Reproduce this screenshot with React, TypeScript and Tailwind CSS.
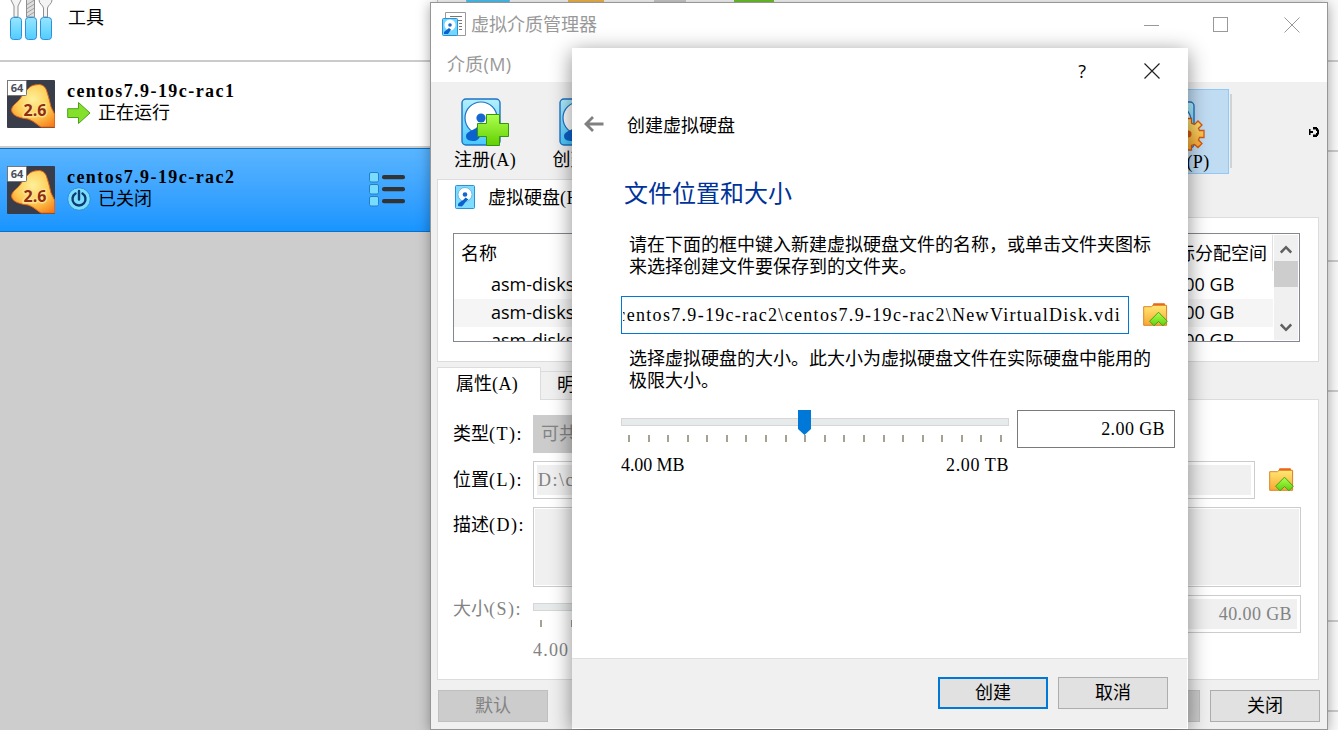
import type { ReactNode } from "react";

const DiskIcon = ({ className = "" }: { className?: string }) => (
  <svg viewBox="0 0 40 48" className={className} preserveAspectRatio="none">
    <defs>
      <linearGradient id="disk" x1="0" y1="0" x2="0" y2="1">
        <stop offset="0" stopColor="#b4f0ff" />
        <stop offset="1" stopColor="#48c8ff" />
      </linearGradient>
    </defs>
    <rect x="1" y="1" width="38" height="46" rx="4" fill="url(#disk)" stroke="#1d73c4" strokeWidth="1.4" />
    <circle cx="20" cy="20" r="16" fill="#fff" stroke="#1d73c4" strokeWidth="1.2" />
    <path d="M5 38C5 33 14 33 19 26L25 30C19 34 20 42 14 43C8 43 5 42 5 38Z" fill="#0b62cd" />
    <circle cx="20" cy="20" r="4.6" fill="#1668cf" />
  </svg>
);

const SmallDiskIcon = () => (
  <svg viewBox="0 0 20 24" className="h-6 w-5 shrink-0">
    <rect x=".5" y=".5" width="19" height="23" rx="1" fill="#7edcff" stroke="#2f8fd8" />
    <circle cx="10" cy="9.500" r="7" fill="#fff" stroke="#5aa9de" strokeWidth=".8" />
    <circle cx="10" cy="9.500" r="2.300" fill="#1668cf" />
    <path d="M3 20C3 17 7 17 10.500 12.500L13.500 14.500C9.500 17 9 20.500 6.500 21.500L3 21Z" fill="#0b62cd" />
  </svg>
);

const PlusIcon = () => (
  <svg viewBox="0 0 32 32" className="absolute left-4 top-4 size-8">
    <defs>
      <linearGradient id="plus" x1="0" y1="0" x2="0" y2="1">
        <stop offset="0" stopColor="#adff4f" />
        <stop offset="1" stopColor="#62cf00" />
      </linearGradient>
    </defs>
    <path d="M9.5 .5H22.5V9.5H31.5V22.5H22.5V31.5H9.5V22.5H.5V9.5H9.5Z" fill="url(#plus)" stroke="#36950e" />
  </svg>
);

const GearIcon = () => (
  <svg viewBox="-17 -17 34 34" className="absolute left-4 top-4 size-[34px]">
    <defs>
      <linearGradient id="gear" x1="0" y1="0" x2="0" y2="1">
        <stop offset="0" stopColor="#fbe77a" />
        <stop offset="1" stopColor="#f9a52b" />
      </linearGradient>
    </defs>
    <path
      d="M-3.500 -15.500H3.500V-11L6.500 -9.500L10 -13L14 -9L10.500 -5.500L11.500 -3.500H16V3.500H11.500L10.500 6L14 9.500L10 13.500L6.500 10.500L3.500 11.500V16H-3.500V11.500L-6.500 10.500L-10 13.500L-14 9.500L-10.500 6L-11.500 3.500H-16V-3.500H-11.500L-10.500 -5.500L-14 -9L-10 -13L-6.500 -9.500L-3.500 -11Z"
      fill="url(#gear)"
      stroke="#d9570f"
      strokeWidth="1.3"
    />
    <circle r="3.5" fill="#d9570f" />
  </svg>
);

const FolderIcon = () => (
  <svg viewBox="0 0 25 24" className="h-6 w-[25px] shrink-0">
    <defs>
      <linearGradient id="folder" x1="0" y1="0" x2="0" y2="1">
        <stop offset="0" stopColor="#ffe873" />
        <stop offset="1" stopColor="#f8a832" />
      </linearGradient>
      <linearGradient id="up" x1="0" y1="0" x2="0" y2="1">
        <stop offset="0" stopColor="#b0ff50" />
        <stop offset="1" stopColor="#5fd010" />
      </linearGradient>
    </defs>
    <path d="M9 4L10.5 .2H21.5L23 3.500H24V10H9Z" fill="#ee5f17" />
    <path d="M.7 3.700H8.5L10 2.300H23.6V22.3H.7Z" fill="url(#folder)" stroke="#dc8424" />
    <path d="M15.5 9.200L24.300 18.200L20 22.800L15.5 18.500L11 22.800L6.600 18.200Z" fill="url(#up)" stroke="#47a414" />
  </svg>
);

const OsIcon = () => (
  <svg viewBox="0 0 48 48" className="size-12 shrink-0">
    <defs>
      <radialGradient id="os" cx=".5" cy=".35" r=".75">
        <stop offset="0" stopColor="#fff09a" />
        <stop offset=".55" stopColor="#fdcb52" />
        <stop offset="1" stopColor="#f77f1b" />
      </radialGradient>
    </defs>
    <rect width="48" height="48" rx="1" fill="#393d49" />
    <path
      d="M21 9C24 5 28 5 32 4.500C37 5 39 8 40 12C42 18 43 23 44 27L47.500 34V47H34C29 44 27 41 21 39C13 38 5 36 4.500 30C5 25 10 23 13 19C16 15 17 12 21 9Z"
      fill="url(#os)"
      stroke="#e4641c"
    />
    <text x="28" y="35.500" textAnchor="middle" fontFamily="Open Sans, sans-serif" fontSize="16" fontWeight="700" fill="#8e2d12" stroke="#fee18a" strokeWidth="3" paintOrder="stroke">
      2.6
    </text>
    <rect x=".5" y=".5" width="19" height="15" rx="1" fill="#fff" stroke="#777" />
    <text x="10" y="12" textAnchor="middle" fontFamily="Open Sans, sans-serif" fontSize="11" fontWeight="700" fill="#4b4f5a">
      64
    </text>
  </svg>
);

const ToolsIcon = () => (
  <svg viewBox="0 0 44 42" className="h-[42px] w-11 shrink-0">
    <defs>
      <linearGradient id="handle" x1="0" y1="0" x2="0" y2="1">
        <stop offset="0" stopColor="#96e6ff" />
        <stop offset="1" stopColor="#52cdff" />
      </linearGradient>
    </defs>
    <g fill="#f4f4f4" stroke="#8f8f8f">
      <path d="M2 0L5 6V17H9V6L12 0" />
      <path d="M17.5 -1V17H25.5V-1Z" fill="#ddd" />
      <path d="M17.5 5L25.5 0M17.5 9L25.5 4M17.5 13L25.5 8M17.5 17L25.5 12" strokeWidth=".8" />
      <path d="M30 0C30 4 34 5 34.500 8V17H38.500V8C39 5 43 4 43 0" />
    </g>
    <g fill="url(#handle)" stroke="#2e8fdc">
      <rect x="1.500" y="17.500" width="11" height="22" rx="3" />
      <rect x="16.500" y="17.500" width="11" height="22" rx="3" />
      <rect x="31.500" y="17.500" width="11" height="22" rx="3" />
    </g>
  </svg>
);

const RunningIcon = () => (
  <svg viewBox="0 0 24 24" className="size-6">
    <path d="M.7 7.700H11.500V1.500L23 12L11.500 22.500V16.500H.7Z" fill="#84e02b" stroke="#4ba11b" />
  </svg>
);

const PowerIcon = () => (
  <svg viewBox="0 0 24 24" className="size-6">
    <circle cx="12" cy="12" r="11.300" fill="#7bdcfc" stroke="#2b8fd6" />
    <path d="M8.500 6.500A6.500 6.500 0 1 0 15.500 6.500M12 4V12.500" fill="none" stroke="#0d3a70" strokeWidth="2.400" strokeLinecap="round" />
  </svg>
);

const ListIcon = () => (
  <svg viewBox="0 0 38 38" className="size-[38px]">
    {[2, 14, 26].map((y) => (
      <g key={y}>
        <rect x="1.500" y={y - 0.5} width="9" height="9.500" rx="1.500" fill="#79dcff" stroke="#2180c8" />
        <rect x="14" y={y + 2} width="23" height="4.200" rx="2" fill="#333" />
      </g>
    ))}
  </svg>
);

const Keys = ({ children }: { children: ReactNode }) => <span className="tracking-[0.4px]">{children}</span>;

const Ticks = ({ count }: { count: number }) => (
  <div className="flex justify-between">
    {Array.from({ length: count }, (_, i) => (
      <span key={i} className="h-[7px] w-0.5 bg-[#a5a294]" />
    ))}
  </div>
);

const MachineRow = ({ name, children }: { name: string; children: ReactNode }) => (
  <div className="flex flex-1 items-center pl-[7px]">
    <OsIcon />
    <div className="mb-[5px] ml-3">
      <div className="h-[22px] text-[18px] font-bold leading-[22px] tracking-[1.44px]">{name}</div>
      <div className="flex h-[22px] items-center gap-[7px]">{children}</div>
    </div>
  </div>
);

const Sidebar = () => (
  <div className="flex w-[437px] flex-col bg-[#cdcdcd]">
    <div className="flex h-[62px] border-b-2 border-[#cbcbcb] bg-white pl-[9px]">
      <ToolsIcon />
      <span className="ml-[15px] mt-1 leading-7">工具</span>
    </div>
    <div className="flex h-[86px] border-b-2 border-[#cbcbcb] bg-white">
      <MachineRow name="centos7.9-19c-rac1">
        <RunningIcon />
        <span>正在运行</span>
      </MachineRow>
    </div>
    <div className="flex h-[84px] items-center border-y border-[#0c70c4] bg-gradient-to-b from-[#58b4ff] to-[#1795ff] pr-[31px]">
      <MachineRow name="centos7.9-19c-rac2">
        <PowerIcon />
        <span>已关闭</span>
      </MachineRow>
      <ListIcon />
    </div>
  </div>
);

const DiskTable = () => (
  <div className="flex h-[109px] overflow-hidden border border-[#828790] bg-white font-['Open_Sans','Noto_Sans_CJK_SC',sans-serif]">
    <div className="mt-px flex-1 overflow-hidden">
      <div className="flex h-9 items-center border-r border-[#e0e0e0] pl-[7px]">
        <span>名称</span>
        <span className="ml-auto mr-[5px]">实际分配空间</span>
      </div>
      {["", "bg-[#f5f5f5]", ""].map((shade, i) => (
        <div key={i} className={`flex h-7 items-center pb-[3px] pl-[37px] ${shade}`}>
          <span>asm-disks</span>
          <span className="ml-auto w-[114px]">40.00 GB</span>
        </div>
      ))}
    </div>
    <div className="m-px flex w-6 flex-col items-center bg-[#f0f0f0]">
      <svg viewBox="0 0 12 9" className="mt-2.5 h-[9px] w-3" fill="none" stroke="#606060" strokeWidth="2.500">
        <path d="M.8 7.500L6 2.200L11.200 7.500" />
      </svg>
      <div className="mt-[7px] h-[26px] w-full bg-[#cdcdcd]" />
      <svg viewBox="0 0 12 9" className="mb-2 mt-auto h-[9px] w-3" fill="none" stroke="#606060" strokeWidth="2.500">
        <path d="M.8 1.500L6 6.800L11.200 1.500" />
      </svg>
    </div>
  </div>
);

const Label = ({ text, hotkey }: { text: string; hotkey: string }) => (
  <div className="w-20 shrink-0 whitespace-nowrap">
    {text}
    <span className="tracking-[1.5px]">({hotkey}):</span>
  </div>
);

const AttributesForm = () => (
  <div className="h-[280px] border border-t-0 border-[#dcdcdc] bg-white pl-[15px] pr-[17px] pt-[15px]">
    <div className="flex h-[38px] items-center">
      <Label text="类型" hotkey="T" />
      <div className="flex h-full w-[240px] items-center bg-[#ccc] pl-2 text-[#838383]">可共享</div>
    </div>
    <div className="mt-2 flex h-[38px] items-center">
      <Label text="位置" hotkey="L" />
      <div className="h-full w-[722px] border border-[#ccc] p-[3px]">
        <div className="flex h-full items-center bg-[#f0f0f0] pl-px tracking-[1.5px] text-[#838383]">D:\centos</div>
      </div>
      <div className="ml-3.5">
        <FolderIcon />
      </div>
    </div>
    <div className="mt-2 flex">
      <div className="pt-[5px]">
        <Label text="描述" hotkey="D" />
      </div>
      <div className="h-20 flex-1 border border-[#ccc] p-px">
        <div className="h-full bg-[#f0f0f0]" />
      </div>
    </div>
    <div className="mt-2 flex text-[#838383]">
      <div className="pt-px">
        <Label text="大小" hotkey="S" />
      </div>
      <div className="w-[598px] pt-2">
        <div className="h-2 border border-[#d6d6d6] bg-[#e7eaea]" />
        <div className="mx-[7px] mt-[9px]">
          <Ticks count={20} />
        </div>
        <div className="mt-2.5 tracking-[1.2px]">4.00 MB</div>
      </div>
      <div className="ml-auto h-[38px] w-40 border border-[#ccc] p-[3px]">
        <div className="flex h-full items-center justify-end bg-[#f0f0f0] pr-[5px]">
          <Keys>40.00 GB</Keys>
        </div>
      </div>
    </div>
  </div>
);

const MediaManager = () => (
  <div className="absolute left-[430px] top-[2px] isolate flex h-[728px] w-[898px] flex-col border border-[#969696] bg-[#f0f0f0] shadow-[0_2px_12px_rgba(0,0,0,0.35)]">
    <div className="flex h-11 shrink-0 items-center bg-white pl-[11px] pr-[27px] text-[#999]">
      <svg viewBox="0 0 24 24" className="-mt-0.5 size-6">
        <path d="M3.500 .5H23.500V23.500H3.500Z" fill="#fff" stroke="#999" />
        <path d="M8 4.500H20M12 8.500H20M17 11.500H20M17 14.500H20M17 17.500H20" stroke="#777" strokeWidth="1.200" />
        <rect x=".5" y="6.500" width="15" height="17" rx="1" fill="#72d6ff" stroke="#2b8fd6" />
        <circle cx="8" cy="13" r="5.500" fill="#fff" />
        <circle cx="8" cy="13" r="1.800" fill="#1668cf" />
        <path d="M2 20L7 16L9 17.500L6 22L2 22Z" fill="#0b62cd" />
      </svg>
      <span className="ml-[5px]">虚拟介质管理器</span>
      <svg viewBox="0 0 156 16" className="ml-auto h-4 w-[156px]" fill="none" stroke="#999">
        <path d="M0 8.500H15M140.500 .5L155.500 15.500M155.500 .5L140.500 15.500" />
        <rect x="69.500" y=".5" width="14" height="14" />
      </svg>
    </div>
    <div className="h-[35px] shrink-0 bg-white pl-4 font-['Open_Sans','Noto_Sans_CJK_SC',sans-serif] leading-[34px] tracking-[0.3px] text-[#999]">介质(M)</div>
    <div className="flex h-[97px] shrink-0 pl-[5px] pr-2 leading-6">
      <div className="flex w-[98px] flex-col items-center pt-4">
        <div className="relative h-12 w-12">
          <DiskIcon className="h-12 w-10" />
          <PlusIcon />
        </div>
        <div className="mt-0.5 whitespace-nowrap">
          注册<Keys>(A)</Keys>
        </div>
      </div>
      <div className="flex w-[98px] flex-col items-center pt-4">
        <div className="w-12">
          <DiskIcon className="h-12 w-10" />
        </div>
        <div className="mt-0.5 whitespace-nowrap">
          创建<Keys>(C)</Keys>
        </div>
      </div>
      <div className="ml-auto mt-[7px] flex h-[85px] w-[100px] flex-col items-center border border-[#90c8f6] bg-[#c0dcf3] pt-[11px]">
        <div className="relative h-12 w-12">
          <DiskIcon className="h-12 w-10" />
          <GearIcon />
        </div>
        <div className="mt-px whitespace-nowrap pl-0.5">
          属性<Keys>(P)</Keys>
        </div>
      </div>
      <div className="ml-px mt-3 h-[74px] w-0.5 bg-[#d2d2d2]" />
      <svg viewBox="0 0 10 10" className="ml-[77px] mt-[45px] size-2.5" fill="#000">
        <path d="M0 2H1.500V4H4V6H1.500V8H0ZM4 0H8V1H9V2.500H10V7.500H9V9H8V10H4V7.500H7V6H8V4H7V2.500H4Z" />
      </svg>
    </div>
    <div className="flex min-h-0 flex-1 flex-col px-1.5 pb-[7px] pr-2">
      <div className="relative z-10 -mb-px flex h-[39px] w-[180px] shrink-0 items-start border border-b-0 border-[#dcdcdc] bg-white pl-[17px] pt-[5px]">
        <SmallDiskIcon />
        <span className="ml-[13px] whitespace-nowrap">
          虚拟硬盘<Keys>(H)</Keys>
        </span>
      </div>
      <div className="h-[145px] shrink-0 border border-[#dcdcdc] bg-white px-[15px] pr-[18px] pt-[15px]">
        <DiskTable />
      </div>
      <div className="mt-[5px] flex h-[33px] shrink-0 items-end">
        <div className="h-full w-[104px] border border-b-0 border-[#dcdcdc] bg-white pl-[18px] leading-8">
          属性<Keys>(A)</Keys>
        </div>
        <div className="h-[29px] w-[104px] border-y border-r border-[#dcdcdc] pl-4 leading-[26px]">
          明细<Keys>(I)</Keys>
        </div>
        <div className="flex-1 border-b border-[#dcdcdc]" />
      </div>
      <AttributesForm />
      <div className="mt-auto flex h-8 shrink-0 pl-px text-center leading-[30px]">
        <div className="w-[110px] border border-[#bfbfbf] bg-[#ccc] text-[#838383]">默认</div>
        <div className="ml-auto w-[110px] border border-[#bfbfbf] bg-[#ccc] text-[#838383]">应用</div>
        <div className="-mr-px ml-2.5 w-[110px] border border-[#adadad] bg-[#e1e1e1]">关闭</div>
      </div>
    </div>
  </div>
);

const CreateDiskDialog = () => (
  <div className="absolute left-[572px] top-12 flex h-[681px] w-[616px] flex-col bg-white shadow-[0_4px_20px_rgba(0,0,0,0.45)]">
    <div className="flex h-[46px] shrink-0 items-center justify-end gap-[58px] pr-7 font-['Open_Sans',sans-serif]">
      <span>?</span>
      <svg viewBox="0 0 16 16" className="size-4" fill="none" stroke="#222" strokeWidth="1.200">
        <path d="M.5 .5L15.500 15.500M15.500 .5L.5 15.500" />
      </svg>
    </div>
    <div className="mt-[18px] flex h-7 items-center pl-3">
      <svg viewBox="0 0 20 16" className="-mt-1 h-4 w-5" fill="none" stroke="#808080" strokeWidth="2.800">
        <path d="M2 8H19.500M9 1L2 8L9 15" />
      </svg>
      <span className="ml-[23px]">创建虚拟硬盘</span>
    </div>
    <div className="ml-[52px] mt-9 text-2xl leading-9 text-[#003399]">文件位置和大小</div>
    <div className="ml-[57px] mt-[22px] leading-[22px]">
      请在下面的框中键入新建虚拟硬盘文件的名称，或单击文件夹图标
      <br />
      来选择创建文件要保存到的文件夹。
    </div>
    <div className="ml-[49px] mt-[18px] flex h-[38px] items-center">
      <div className="h-full w-[508px] border border-[#0078d7] px-px pr-[7px]">
        <div className="flex h-full items-center justify-end overflow-hidden whitespace-nowrap tracking-[1.31px]">centos7.9-19c-rac2\centos7.9-19c-rac2\NewVirtualDisk.vdi</div>
      </div>
      <div className="ml-3.5">
        <FolderIcon />
      </div>
    </div>
    <div className="ml-[57px] mt-[14px] leading-[22px]">
      选择虚拟硬盘的大小。此大小为虚拟硬盘文件在实际硬盘中能用的
      <br />
      极限大小。
    </div>
    <div className="ml-[49px] mt-[18px] flex">
      <div className="relative w-[388px] pt-2">
        <div className="h-2 border border-[#d6d6d6] bg-[#e7eaea]" />
        <svg viewBox="0 0 13 25" className="absolute left-[177px] top-0 h-[25px] w-[13px]">
          <path d="M0 0H13V19L6.500 25L0 19Z" fill="#0078d7" />
        </svg>
        <div className="mx-[7px] mt-[9px]">
          <Ticks count={20} />
        </div>
        <div className="mt-[9px] flex justify-between leading-7">
          <span className="tracking-[-0.1px]">4.00 MB</span>
          <span className="tracking-[0.6px]">2.00 TB</span>
        </div>
      </div>
      <div className="ml-2 flex h-[38px] w-[158px] items-center justify-end border border-[#7a7a7a] pr-[9px] tracking-[0.4px]">2.00 GB</div>
    </div>
    <div className="mt-auto flex h-[71px] shrink-0 gap-2.5 border border-l-0 border-white border-t-[#dfdfdf] bg-[#f0f0f0] pl-[366px] pt-[18px] text-center">
      <div className="h-8 w-[110px] border-2 border-[#0078d7] bg-[#e1e1e1] leading-7">创建</div>
      <div className="h-8 w-[110px] border border-[#adadad] bg-[#e1e1e1] leading-[30px]">取消</div>
    </div>
  </div>
);

export default function App() {
  return (
    <div className="relative flex h-[730px] w-[1338px] overflow-hidden bg-white font-['Liberation_Serif','Noto_Sans_CJK_SC',sans-serif] text-[18px] leading-[26px] text-black">
      <Sidebar />
      <div className="flex flex-1 flex-col border-l border-[#c8c8c8] bg-[#fafafa]">
        <div className="flex h-[62px] items-start border-b-2 border-[#cbcbcb]">
          <div className="ml-7 h-[3px] w-11 rounded-b bg-[#4cc4f4]" />
          <div className="ml-[58px] h-[3px] w-9 bg-[#f2b84c]" />
          <div className="ml-[50px] h-[3px] w-8 bg-[#ccc]" />
          <div className="ml-12 h-[3px] w-10 bg-[#6fc52c]" />
        </div>
        <div className="h-[90px] border-b-2 border-[#cbcbcb]" />
        <div className="h-[110px] border-b-2 border-[#cbcbcb]" />
        <div className="h-[130px] border-b-2 border-[#cbcbcb]" />
        <div className="h-[230px] border-b-2 border-[#cbcbcb]" />
        <div className="h-[90px] border-b-2 border-[#cbcbcb]" />
      </div>
      <MediaManager />
      <CreateDiskDialog />
    </div>
  );
}
